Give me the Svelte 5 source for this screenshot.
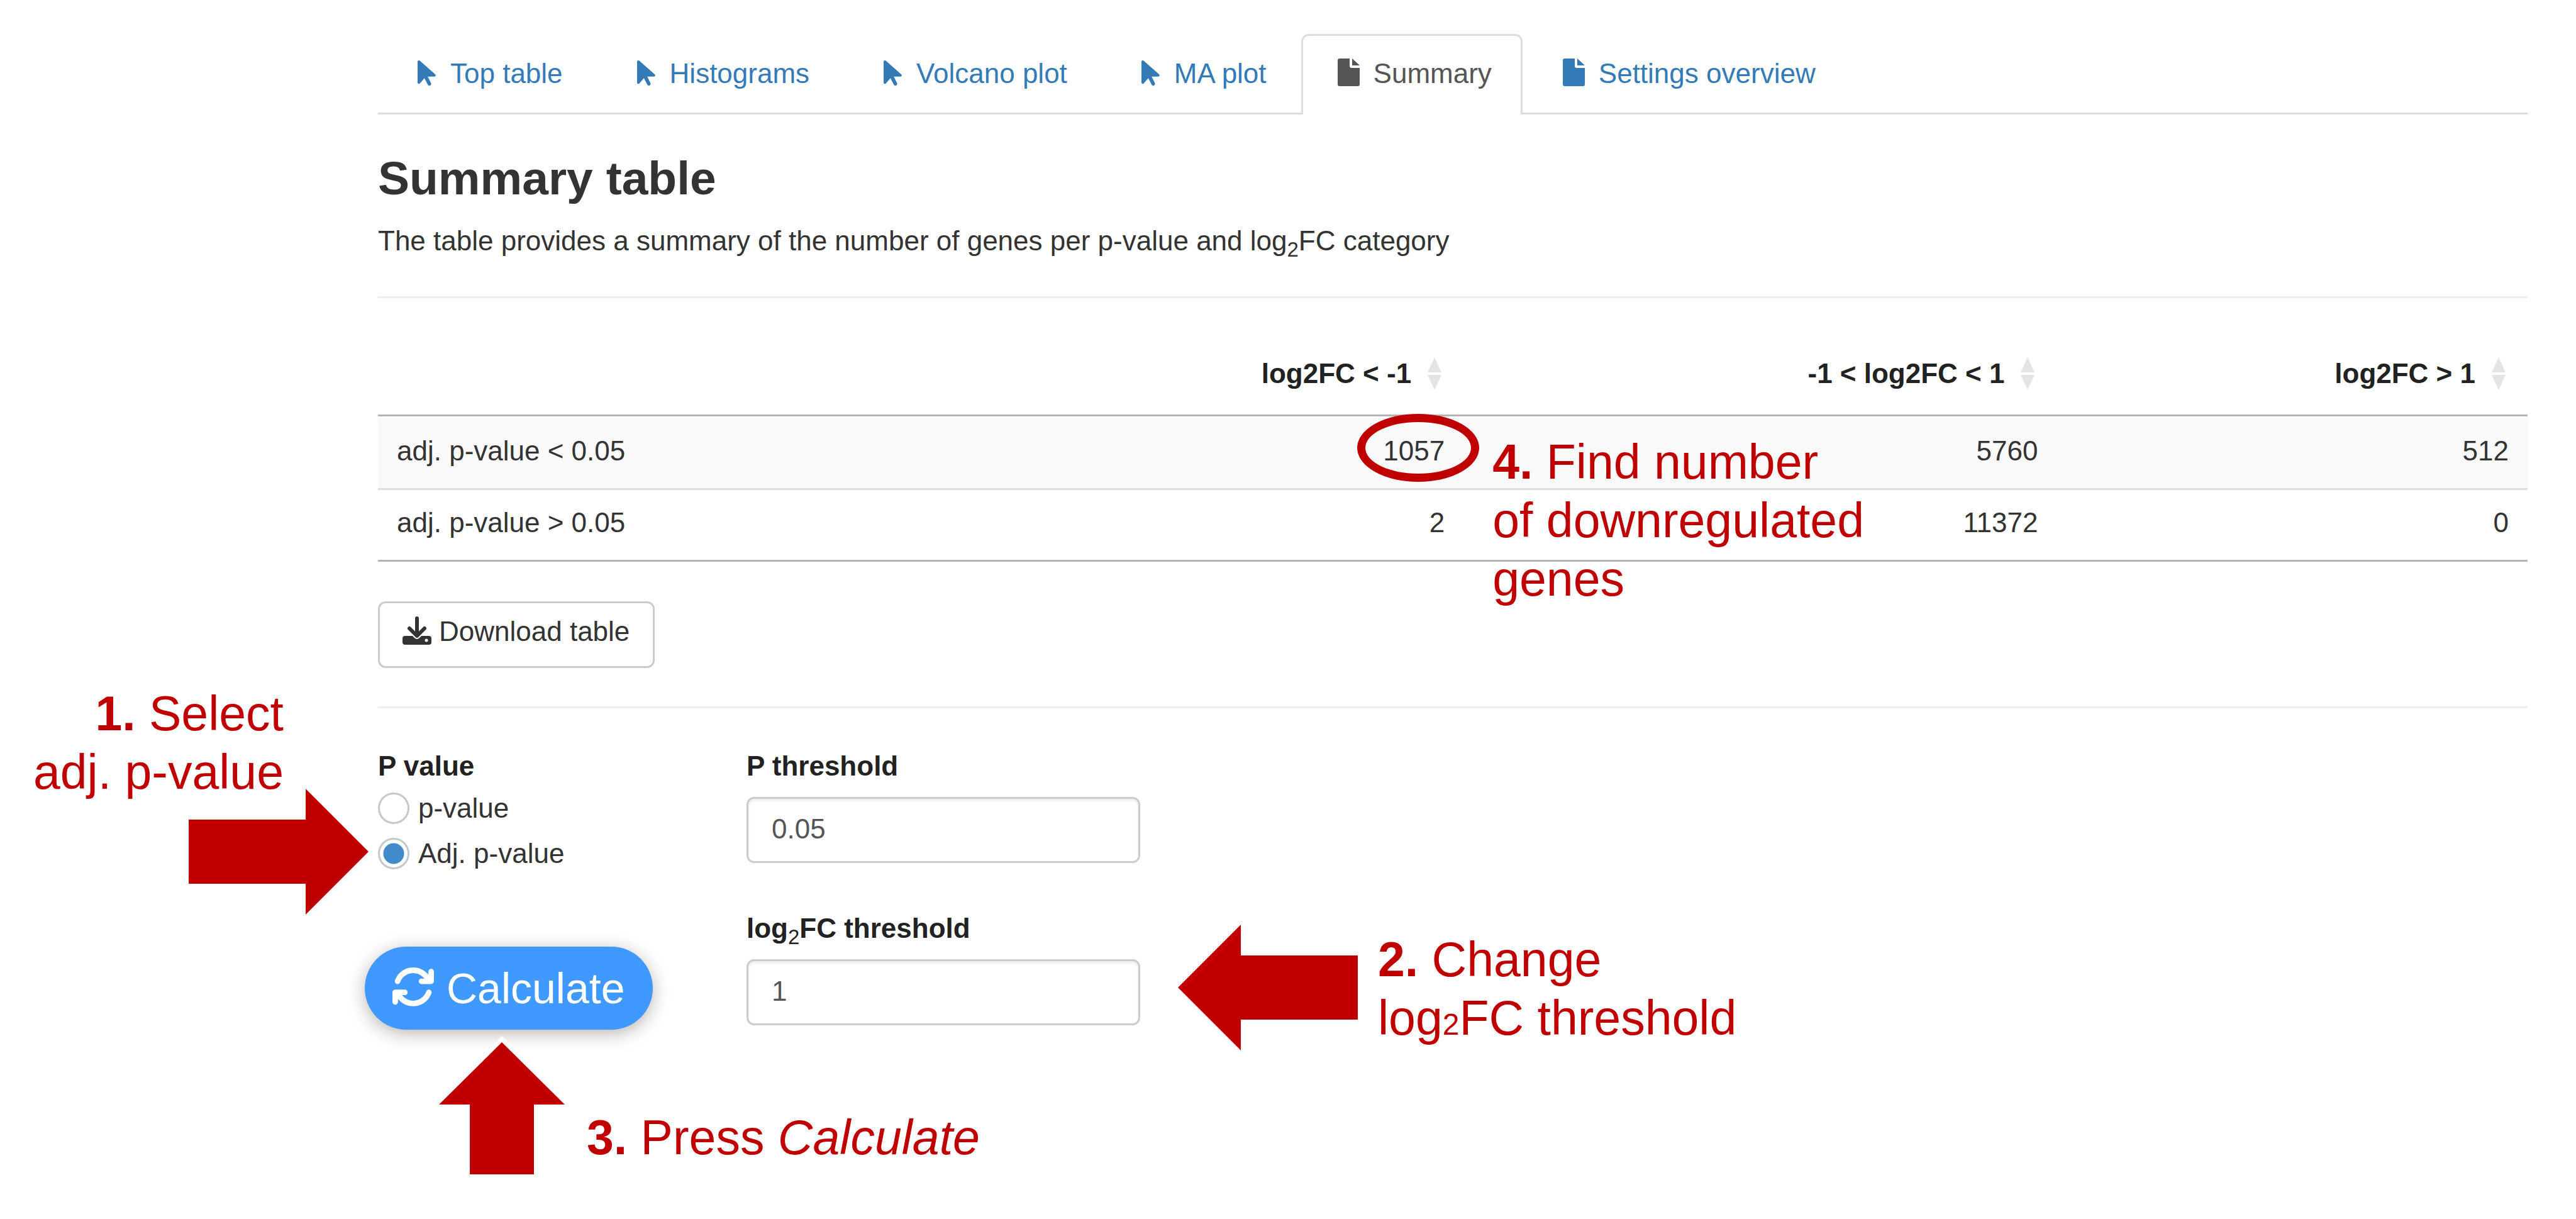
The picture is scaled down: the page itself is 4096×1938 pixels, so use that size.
<script lang="ts">
  const tabs = [
    { id: 'top-table', label: 'Top table', icon: 'pointer' },
    { id: 'histograms', label: 'Histograms', icon: 'pointer' },
    { id: 'volcano', label: 'Volcano plot', icon: 'pointer' },
    { id: 'ma', label: 'MA plot', icon: 'pointer' },
    { id: 'summary', label: 'Summary', icon: 'file', active: true },
    { id: 'settings', label: 'Settings overview', icon: 'file' }
  ];

  const columns = ['log2FC < -1', '-1 < log2FC < 1', 'log2FC > 1'];
  const rows = [
    { label: 'adj. p-value < 0.05', values: [1057, 5760, 512] },
    { label: 'adj. p-value > 0.05', values: [2, 11372, 0] }
  ];

  let pKind = $state('adj');
  let pThreshold = $state('0.05');
  let fcThreshold = $state('1');
</script>

<main class="page">
  <nav>
    <ul class="tabs">
      {#each tabs as tab}
        <li>
          <a href="#{tab.id}" class:active={tab.active}>
            {#if tab.icon === 'pointer'}
              <svg class="tab-icon" viewBox="0 0 54 50" aria-hidden="true">
                <path transform="translate(14 1) scale(0.09)" d="M0 55.200V426c0 12.200 9.900 22 22 22c6.300 0 12.400-2.700 16.600-7.500L121.200 346l58.100 116.300c7.900 15.800 27.100 22.200 42.900 14.300s22.200-27.100 14.300-42.900L179.800 320H297.900c12.200 0 22.100-9.900 22.100-22.100c0-6.300-2.700-12.300-7.400-16.500L38.600 37.900C34.300 34.100 28.900 32 23.200 32C10.400 32 0 42.400 0 55.200z" />
              </svg>
            {:else}
              <svg class="tab-icon" viewBox="0 0 54 50" aria-hidden="true">
                <path d="M12 1H28V13Q28 16 31 16H44V42Q44 45 41 45H12Q9 45 9 42V4Q9 1 12 1ZM32 1L44 12H32Z" />
              </svg>
            {/if}
            {tab.label}
          </a>
        </li>
      {/each}
    </ul>
  </nav>

  <h1>Summary table</h1>
  <p class="intro">The table provides a summary of the number of genes per p-value and log<sub>2</sub>FC category</p>
  <hr />

  <table>
    <colgroup>
      <col />
      <col class="col-low" />
      <col class="col-mid" />
      <col class="col-high" />
    </colgroup>
    <thead>
      <tr>
        <td></td>
        {#each columns as column}
          <th scope="col">
            <span class="heading">
              {column}
              <svg class="sort" viewBox="0 0 22 52" aria-hidden="true">
                <path d="M11 0L22 24H0ZM0 28H22L11 52Z" />
              </svg>
            </span>
          </th>
        {/each}
      </tr>
    </thead>
    <tbody>
      {#each rows as row, r}
        <tr>
          <th scope="row">{row.label}</th>
          {#each row.values as value, c}
            <td>
              {#if r === 0 && c === 0}
                <span class="marked">
                  {value}
                  <span class="ring"></span>
                  <span class="note note-find"><b>4.</b> Find number<br />of downregulated<br />genes</span>
                </span>
              {:else}
                {value}
              {/if}
            </td>
          {/each}
        </tr>
      {/each}
    </tbody>
  </table>

  <button type="button" class="download">
    <svg class="download-icon" viewBox="0 0 46 50" aria-hidden="true">
      <rect class="tray" x="0" y="32" width="46" height="14" rx="4" />
      <circle class="light" cx="38" cy="39" r="2.500" />
      <path class="halo" d="M11 20L23 32L35 20" />
      <path class="stroke" d="M23 4V32M11 20L23 32L35 20" />
    </svg>
    Download table
  </button>
  <hr />

  <form class="controls" onsubmit={(e) => e.preventDefault()}>
    <div class="left">
      <fieldset>
        <legend>P value</legend>
        <label class="choice">
          <input type="radio" name="p-kind" value="raw" bind:group={pKind} />
          p-value
        </label>
        <label class="choice">
          <input type="radio" name="p-kind" value="adj" bind:group={pKind} />
          Adj. p-value
        </label>
        <span class="note note-select"><b>1.</b> Select<br />adj. p-value</span>
        <svg class="arrow arrow-select" viewBox="0 0 286 200" aria-hidden="true">
          <path d="M0 49H186V0L286 100L186 200V151H0Z" />
        </svg>
      </fieldset>

      <div class="action">
        <button type="submit" class="calculate">
          <svg class="sync" viewBox="16 24 480 502" aria-hidden="true">
            <path d="M105.100 202.600c7.700-21.800 20.200-42.300 37.800-59.800c62.500-62.500 163.800-62.500 226.300 0L386.300 160H352c-17.700 0-32 14.300-32 32s14.300 32 32 32H463.900c17.700 0 32-14.300 32-32V80c0-17.700-14.300-32-32-32s-32 14.300-32 32v35.200L414.400 97.600c-87.500-87.500-229.300-87.500-316.800 0C73.200 122 55.600 150.700 44.800 181.400c-5.900 16.700 2.900 34.900 19.500 40.800s34.900-2.900 40.800-19.500zM39 289.300c-5 1.500-9.800 4.200-13.700 8.200c-4 4-6.700 8.800-8.100 14c-.3 1.200-.6 2.500-.8 3.800c-.3 1.700-.4 3.400-.4 5.100V432c0 17.700 14.300 32 32 32s32-14.300 32-32V396.900l17.600 17.500c87.500 87.400 229.300 87.400 316.700 0c24.400-24.400 42.100-53.100 52.900-83.700c5.900-16.700-2.900-34.900-19.500-40.800s-34.900 2.900-40.800 19.500c-7.700 21.800-20.200 42.300-37.800 59.800c-62.500 62.500-163.800 62.500-226.300 0l-.1-.1L125.600 352H160c17.700 0 32-14.300 32-32s-14.300-32-32-32H48.400c-1.600 0-3.200.1-4.800.3s-3.100.5-4.600 1z" />
          </svg>
          Calculate
        </button>
        <svg class="arrow arrow-press" viewBox="0 0 200 210" aria-hidden="true">
          <path d="M100 0L200 99H151V210H49V99H0Z" />
        </svg>
        <span class="note note-press"><b>3.</b> Press <i>Calculate</i></span>
      </div>
    </div>

    <div class="right">
      <div class="field">
        <label for="p-threshold">P threshold</label>
        <input id="p-threshold" type="text" bind:value={pThreshold} />
      </div>
      <div class="field">
        <label for="fc-threshold">log<sub>2</sub>FC threshold</label>
        <input id="fc-threshold" type="text" bind:value={fcThreshold} />
        <svg class="arrow arrow-change" viewBox="0 0 286 200" aria-hidden="true">
          <path d="M286 49H100V0L0 100L100 200V151H286Z" />
        </svg>
        <span class="note note-change"><b>2.</b> Change<br />log<small>2</small>FC threshold</span>
      </div>
    </div>
  </form>
</main>

<style>
  :global(body) {
    margin: 0;
    background: #fff;
  }

  .page {
    box-sizing: border-box;
    min-height: 100vh;
    padding: 54px 77px 72px 601px;
    overflow: hidden;
    font-family: 'Liberation Sans', Arial, sans-serif;
    font-size: 44px;
    line-height: 62px;
    color: #333;
  }

  .tabs {
    display: flex;
    gap: 6px;
    margin: 0;
    padding: 0;
    list-style: none;
    border-bottom: 3px solid #ddd;
  }

  .tabs li {
    margin-bottom: -3px;
  }

  .tabs a {
    display: flex;
    align-items: center;
    gap: 12px;
    padding: 29px 46px 34px;
    border: 3px solid transparent;
    border-bottom: 0;
    border-radius: 12px 12px 0 0;
    color: #337ab7;
    text-decoration: none;
    white-space: nowrap;
  }

  .tabs a.active {
    border-color: #ddd;
    background: #fff;
    color: #555;
  }

  .tab-icon {
    width: 54px;
    height: 50px;
    fill: currentColor;
  }

  h1 {
    margin: 60px 0 28px;
    font-size: 75px;
    line-height: 82px;
    font-weight: 700;
  }

  .intro {
    margin: 0;
  }

  sub {
    font-size: 33px;
    line-height: 0;
    vertical-align: -10px;
    font-weight: 400;
  }

  hr {
    height: 3px;
    margin: 57px 0;
    border: 0;
    background: #eee;
  }

  table {
    width: 100%;
    margin-bottom: 63px;
    border-collapse: separate;
    border-spacing: 0;
    table-layout: fixed;
    border-bottom: 3px solid #b5b5b5;
  }

  .col-low {
    width: 22%;
  }

  .col-mid {
    width: 27.600%;
  }

  .col-high {
    width: 21.900%;
  }

  thead th,
  thead td {
    padding: 32px 30px 34px;
    border-bottom: 3px solid #b5b5b5;
    text-align: right;
    color: #222;
  }

  .heading {
    display: flex;
    justify-content: flex-end;
    align-items: center;
    gap: 26px;
    padding-right: 5px;
  }

  .sort {
    width: 22px;
    height: 52px;
    fill: #e4e4e4;
  }

  tbody th,
  tbody td {
    padding: 21px 30px 28px;
    border-top: 3px solid #ddd;
    text-align: right;
    font-weight: 400;
  }

  tbody th {
    text-align: left;
  }

  tbody tr:first-child > * {
    border-top-color: #fff;
    background: #f9f9f9;
    background-clip: padding-box;
  }

  .marked {
    position: relative;
  }

  .ring {
    position: absolute;
    box-sizing: border-box;
    top: -34px;
    right: -55px;
    width: 194px;
    height: 108px;
    border: 13px solid #c00000;
    border-radius: 50%;
  }

  button {
    display: flex;
    align-items: center;
    font-family: inherit;
    white-space: nowrap;
    cursor: pointer;
  }

  .download {
    gap: 12px;
    padding: 14px 37px 24px 36px;
    border: 3px solid #ccc;
    border-radius: 12px;
    background: #fff;
    color: #333;
    font-size: 44px;
    line-height: 62px;
  }

  .download-icon {
    width: 46px;
    height: 50px;
    fill: none;
    stroke-linecap: round;
    stroke-linejoin: round;
  }

  .download-icon .tray {
    fill: currentColor;
  }

  .download-icon .light {
    fill: #fff;
  }

  .download-icon .halo {
    stroke: #fff;
    stroke-width: 10px;
  }

  .download-icon .stroke {
    stroke: currentColor;
    stroke-width: 6px;
  }

  .download + hr {
    margin: 61px 0;
  }

  .controls {
    display: flex;
  }

  .left {
    width: 586px;
  }

  .right {
    display: flex;
    flex-direction: column;
    gap: 73px;
    width: 626px;
  }

  fieldset {
    position: relative;
    display: flex;
    flex-direction: column;
    gap: 10px;
    margin: 0;
    padding: 0;
    border: 0;
  }

  legend,
  .field label {
    padding: 0;
    color: #222;
    font-weight: 700;
  }

  legend {
    margin-bottom: 5px;
  }

  .choice {
    display: flex;
    align-items: center;
    gap: 14px;
  }

  .choice input {
    appearance: none;
    box-sizing: border-box;
    width: 50px;
    height: 50px;
    margin: 0;
    border: 3px solid #c3c8cc;
    border-radius: 50%;
    background: #fff;
  }

  .choice input:checked {
    background: radial-gradient(circle, #428bca 16px, #fff 17px);
  }

  .action {
    position: relative;
    margin-top: 117px;
  }

  .calculate {
    gap: 20px;
    height: 132px;
    margin-left: -21px;
    padding: 0 44px;
    border: 0;
    border-radius: 66px;
    background: #3f99ff;
    box-shadow: 0 6px 28px rgba(40, 20, 20, 0.32);
    color: #fff;
    font-size: 68px;
  }

  .sync {
    width: 66px;
    height: 69px;
    fill: currentColor;
  }

  .field {
    position: relative;
    display: flex;
    flex-direction: column;
    gap: 18px;
  }

  .field input {
    box-sizing: border-box;
    width: 100%;
    height: 105px;
    padding: 0 37px 3px;
    border: 3px solid #ccc;
    border-radius: 12px;
    box-shadow: inset 0 3px 4px rgba(0, 0, 0, 0.08);
    color: #555;
    font-family: inherit;
    font-size: 44px;
  }

  .note {
    position: absolute;
    color: #c00000;
    font-size: 77px;
    line-height: 93px;
    text-align: left;
    white-space: nowrap;
  }

  .note small {
    font-size: 48px;
    line-height: 0;
  }

  .note-find {
    top: -4px;
    left: 174px;
  }

  .note-select {
    top: -166px;
    right: calc(100% + 150px);
    text-align: right;
  }

  .note-press {
    top: 257px;
    left: 332px;
  }

  .note-change {
    top: 34px;
    left: 1004px;
  }

  .arrow {
    position: absolute;
    overflow: visible;
    fill: #c00000;
    stroke: #fff;
    stroke-width: 14px;
    paint-order: stroke;
  }

  .arrow-select,
  .arrow-change {
    width: 286px;
    height: 200px;
  }

  .arrow-select {
    top: 0;
    right: calc(100% + 15px);
  }

  .arrow-change {
    top: 25px;
    left: 686px;
  }

  .arrow-press {
    top: 152px;
    left: 97px;
    width: 200px;
    height: 210px;
  }
</style>
